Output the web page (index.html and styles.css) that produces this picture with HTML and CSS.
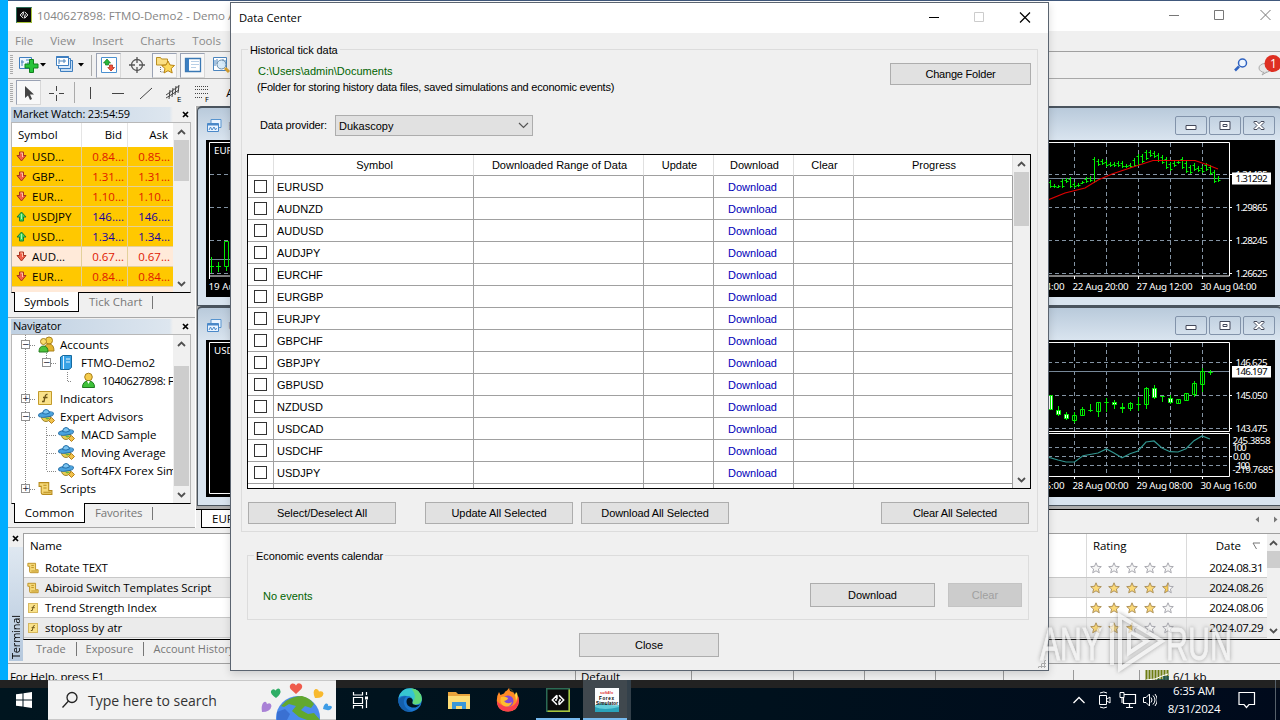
FILE: index.html
```html
<!DOCTYPE html>
<html lang="en">
<head>
  <meta charset="UTF-8" />
  <meta name="viewport" content="width=device-width, initial-scale=1.0"/>
  <title>Data Center</title>
  <link rel="stylesheet" href="styles.css">
</head>
<body>

  <!-- Shared icons -->
  <svg class="sprites" width="0" height="0">
    <symbol id="i-down" viewBox="0 0 11 11"><path d="M3.500 1h4v3.500H10L5.500 10 1 4.500h2.500z" fill="#f0604a" stroke="#a8321c"/><path d="M4.500 2h2v4" fill="none" stroke="#ffc0a8"/></symbol>
    <symbol id="i-up" viewBox="0 0 11 11"><path d="M3.500 10h4V6H10L5.500 1 1 6h2.500z" fill="#3fd05c" stroke="#1b7d35"/><path d="M5.500 3v5" fill="none" stroke="#a8f5b0"/></symbol>
    <symbol id="i-arrow-up" viewBox="0 0 9 6"><path d="M1 5l3.500-3.500L8 5" fill="none" stroke="#505050" stroke-width="1.800"/></symbol>
    <symbol id="i-arrow-down" viewBox="0 0 9 6"><path d="M1 1l3.500 3.500L8 1" fill="none" stroke="#505050" stroke-width="1.800"/></symbol>
    <symbol id="i-x" viewBox="0 0 7 7"><path d="M1 1l5 5M6 1L1 6" stroke="#000" stroke-width="1.700"/></symbol>
    <symbol id="i-mt" viewBox="0 0 16 16"><path d="M.5.5h15v15H.5z" fill="#0a0a0a" stroke="#2b6b55"/><path d="M1 15.500h14.500V1" fill="none" stroke="#a9c53a"/><path d="M7.300 4.800L4.200 8l3.100 3.200M8.700 4.800L11.800 8l-3.100 3.200M7.300 4.800v2.700M8.700 11.200V8.500M6 8h1.300M8.700 8H10" fill="none" stroke="#fff"/></symbol>
    <symbol id="i-chart" viewBox="0 0 16 16"><path d="M5 1.500h10v8H5z" fill="#eaf4ff" stroke="#5794cf"/><path d="M1.500 5.500h11v8h-11z" fill="#eaf4ff" stroke="#4a88c8"/><path d="M1.500 6.500h11" stroke="#4a88c8" stroke-width="2"/><path d="M3 12l1.500-3L6 12l2-3 1.500 3 1-2" fill="none" stroke="#4a88c8"/></symbol>
    <symbol id="i-expert" viewBox="0 0 18 17"><circle cx="8" cy="9" r="4.500" fill="#eacb50" stroke="#9c8630"/><path d="M7 9.500Q9 13 12 10" fill="#6ab83a"/><ellipse cx="8" cy="6.500" rx="7.500" ry="2.600" fill="#4aa3df" stroke="#236fa8" transform="rotate(-8 8 6.500)"/><path d="M4.500 5.500Q5 1.500 8 1.500t3.500 3.500Q8 7 4.500 5.500z" fill="#7cc5f2" stroke="#236fa8"/><path d="M13.500 9.500l3 3-3 3-3-3z" fill="#f2c24a" stroke="#b5801c"/></symbol>
    <symbol id="i-script" viewBox="0 0 14 14"><path d="M1 1.500h9v7.500h3v3.500H4.500Q3 12.500 3 11V5H1z" fill="#f5d878" stroke="#b88b1c"/><path d="M5 4h3M5 6.500h3M5 10.500h7" stroke="#b88b1c"/></symbol>
    <symbol id="i-func" viewBox="0 0 14 14"><path d="M.5.5h13v13H.5z" fill="#fae28a" stroke="#c39a2a"/><path d="M9.500 3.500Q7.500 3 7 6L6 10.500H4M5 6.500h4.500" fill="none" stroke="#6d5417" stroke-width="1.300"/></symbol>
    <symbol id="i-star" viewBox="0 0 12 12"><path d="M6 .8l1.500 3.500 3.800.3-2.900 2.500.9 3.700L6 8.800l-3.300 2 .9-3.700L.7 4.600l3.800-.3z" fill="#f6f6f6" stroke="#a0a0a8" stroke-width=".9"/></symbol>
    <symbol id="i-star-full" viewBox="0 0 12 12"><path d="M6 .8l1.500 3.500 3.800.3-2.900 2.500.9 3.700L6 8.800l-3.300 2 .9-3.700L.7 4.600l3.800-.3z" fill="#fbd978" stroke="#a88a50" stroke-width=".9"/></symbol>
    <symbol id="i-star-half" viewBox="0 0 12 12"><path d="M6 .8l1.500 3.500 3.800.3-2.900 2.500.9 3.700L6 8.800l-3.300 2 .9-3.700L.7 4.600l3.800-.3z" fill="#f6f6f6" stroke="#a0a0a8" stroke-width=".9"/><path d="M6 .8v8l-3.300 2 .9-3.700L.7 4.600l3.800-.3z" fill="#fbcf58" stroke="#a88a50" stroke-width=".7"/></symbol>
    <symbol id="i-win-min" viewBox="0 0 30 17"><path d="M10 8.500h10v4H10z" fill="#fff" stroke="#44495a"/></symbol>
    <symbol id="i-win-max" viewBox="0 0 30 17"><path d="M10 4.500h10v8H10z" fill="#fff" stroke="#44495a"/><path d="M13 7.500h4v2h-4z" fill="#fff" stroke="#44495a"/></symbol>
    <symbol id="i-win-close" viewBox="0 0 30 17"><path d="M10 4.500h3l2 2.200 2-2.200h3v1l-3 3 3 3v1h-3l-2-2.200-2 2.200h-3v-1l3-3-3-3z" fill="#fff" stroke="#44495a"/></symbol>
  </svg>

  <!-- Trading terminal -->
  <div class="terminal-window">
    <div class="titlebar">
      <svg class="app-icon" width="16" height="16"><use href="#i-mt"/></svg>
      <span class="title-text">1040627898: FTMO-Demo2 - Demo Account</span>
      <svg class="caption-buttons" width="119" height="30" viewBox="0 0 119 30"><path d="M8 15.500h10M53.500 10.500h9v9h-9zM99.500 10l10 10M109.500 10l-10 10" fill="none" stroke="#777"/></svg>
    </div>
    <div class="menubar">
      <span>File</span><span>View</span><span>Insert</span><span>Charts</span><span>Tools</span>
    </div>

    <div class="toolbar">
      <i class="grip"></i>
      <span class="tool w35"><svg width="32" height="20" viewBox="0 0 32 20"><path d="M2.500 2.500h12v11h-12z" fill="#eef6ff" stroke="#3f7fc0"/><path d="M5 5v6M4 7h3M9 5h4M10 8h3" stroke="#4a84bd"/><path d="M8 9h4.500V4.500h4V9H21v4h-4.500v4.500h-4V13H8z" fill="#27c43a" stroke="#12801f"/><path d="M23 8h6l-3 3.500z"/></svg></span>
      <span class="tool w38"><svg width="30" height="20" viewBox="0 0 30 20"><path d="M5.500 5.500h12v11h-12z" fill="#c8dff5" stroke="#3f7fc0"/><path d="M3.500 3.500h12v10h-12z" fill="#dcecfb" stroke="#3f7fc0"/><path d="M1.500 1.500h12v9h-12z" fill="#fff" stroke="#3f7fc0"/><path d="M1.500 2h12" stroke="#3f7fc0" stroke-width="2"/><path d="M4 4v5M4 6h7M9 4v4" stroke="#4a84bd"/><path d="M23 8h6l-3 3.500z"/></svg></span>
      <i class="sep"></i>
      <span class="tool pressed"><svg width="18" height="18" viewBox="0 0 18 18"><path d="M1.500 1.500h15v15h-15z" fill="#fff" stroke="#4a90d0"/><path d="M7 3l3.500 4h-2v2h-3V7h-2z" fill="#25b83b" stroke="#137a20" stroke-width=".7"/><path d="M11 15l-3.200-3.500h1.700V9h3v2.500h2z" fill="#f2543c" stroke="#a32614" stroke-width=".7"/></svg></span>
      <span class="tool w31"><svg width="18" height="18" viewBox="0 0 18 18"><circle cx="9" cy="9" r="5.500" fill="none" stroke="#555" stroke-width="1.300"/><path d="M9 1v6M9 11v6M1 9h6M11 9h6" stroke="#555" stroke-width="1.300"/></svg></span>
      <span class="tool pressed"><svg width="20" height="20" viewBox="0 0 20 20"><path d="M1.500 2.500h4l1 1.500h6v6h-11z" fill="#fbdf84" stroke="#b98e23"/><path d="M5.500 12v5h5" fill="none" stroke="#777" stroke-dasharray="1 1"/><path d="M13 6l2 4 4.500.5-3.300 3 1 4.500-4.200-2.300L9 18l1-4.500-3.300-3L11 10z" fill="#fcd95c" stroke="#b98412"/></svg></span>
      <i class="gap"></i>
      <span class="tool pressed"><svg width="18" height="18" viewBox="0 0 18 18"><path d="M1.500 2.500h15v13h-15z" fill="#fff" stroke="#3a78b4" stroke-width="1.300"/><path d="M2 3h3v12H2z" fill="#3c7fc2"/><path d="M7 5.500h8M7 8.500h8M7 11.500h5" stroke="#b8cfe6"/></svg></span>
      <span class="tool w31"><svg width="20" height="20" viewBox="0 0 20 20"><path d="M2.500 2.500h13v13h-13z" fill="#fff" stroke="#4a84bd"/><path d="M4 5v6M6 4v5M12 4v5M14 5v6" stroke="#4a84bd"/><circle cx="10.500" cy="9.500" r="4.500" fill="#d4e9f8" fill-opacity=".9" stroke="#668aa8"/><path d="M14 13l4 4" stroke="#d6a030" stroke-width="3"/></svg></span>
      <svg class="toolbar-right" width="48" height="26" viewBox="0 0 48 26"><circle cx="10.500" cy="11" r="4" fill="#eef6ff" stroke="#2f62c0" stroke-width="1.500"/><path d="M7 14.500l-4 4" stroke="#2f62c0" stroke-width="2.500"/><ellipse cx="33" cy="16" rx="6" ry="4.500" fill="#e6e6e6" stroke="#aaa"/><path d="M32 20l-2 3 5-3" fill="#ddd" stroke="#aaa"/><circle cx="41" cy="11.500" r="8.500" fill="#de2f22"/><text x="38" y="16" class="badge">1</text></svg>
    </div>

    <div class="toolbar second">
      <i class="grip"></i>
      <span class="tool pressed"><svg width="18" height="18" viewBox="0 0 18 18"><path d="M5 2v12l3-2.500 2 4.500 2-1-2-4.500h4z" fill="#444"/></svg></span>
      <span class="tool w30"><svg width="18" height="18" viewBox="0 0 18 18"><path d="M9.500 2v5M9.500 11v6M2 9.500h5M12 9.500h5" stroke="#444"/></svg></span>
      <i class="sep"></i>
      <span class="tool w28 first"><svg width="18" height="18" viewBox="0 0 18 18"><path d="M9.500 3v12" stroke="#444"/></svg></span>
      <span class="tool w28"><svg width="18" height="18" viewBox="0 0 18 18"><path d="M3 9.500h12" stroke="#444"/></svg></span>
      <span class="tool w28"><svg width="18" height="18" viewBox="0 0 18 18"><path d="M3 15L15 4" stroke="#444"/></svg></span>
      <span class="tool w28"><svg width="18" height="20" viewBox="0 0 18 20"><path d="M1 12L14 3M1 15l13-8M5 7l-1 9M8 5L7 14M11 3l-1 9M14 2l-1 8" stroke="#444"/><text x="12" y="19" class="tiny">E</text></svg></span>
      <span class="tool w28"><svg width="18" height="20" viewBox="0 0 18 20"><path d="M2 3.500h13M2 6.500h13M2 10.500h13M2 14.500h8" stroke="#444" stroke-dasharray="1 1"/><text x="12" y="19" class="tiny">F</text></svg></span>
      <span class="tool w28">A</span>
    </div>

    <div class="work-area">
      <div class="docks">
        <div class="dock market">
          <div class="dock-caption"><span>Market Watch: 23:54:59</span><svg width="7" height="7"><use href="#i-x"/></svg></div>
          <div class="dock-body">
            <div class="quotes">
              <div class="quote head"><span>Symbol</span><span>Bid</span><span>Ask</span></div>
              <div id="quoteRows"></div>
            </div>
            <div class="scroll">
              <svg width="9" height="6"><use href="#i-arrow-up"/></svg>
              <i class="thumb quote-thumb"></i>
              <svg class="last" width="9" height="6"><use href="#i-arrow-down"/></svg>
            </div>
          </div>
          <div class="dock-tabs"><b>Symbols</b><span>Tick Chart</span></div>
        </div>

        <div class="dock navigator">
          <div class="dock-caption"><span>Navigator</span><svg width="7" height="7"><use href="#i-x"/></svg></div>
          <div class="dock-body">
            <div class="tree">
              <svg class="tree-lines" width="60" height="168" viewBox="0 0 60 168"><path d="M13.500 0v155M14 10.500h10M14 64.500h10M14 82.500h10M14 154.500h10M34.500 18v10M35 28.500h10M55.500 37v9.500h10M34.500 92v44M35 100.500h10M35 118.500h10M35 136.500h10" fill="none" stroke="#888" stroke-dasharray="1 1"/></svg>
              <div class="node"><i class="expander">−</i><svg width="17" height="17" viewBox="0 0 17 17"><circle cx="11" cy="4.500" r="3.500" fill="#f3cf4a" stroke="#a9801b"/><path d="M6 15Q6 8 11 8t5 7z" fill="#e3b52d" stroke="#a9801b"/><circle cx="5.500" cy="5.500" r="3" fill="#f7dc6c" stroke="#a9801b"/><path d="M1 16q0-6 4.500-6t4.500 6z" fill="#4cc43c" stroke="#227a1c"/></svg><span>Accounts</span></div>
              <div class="node l2"><i class="expander">−</i><svg width="14" height="17" viewBox="0 0 14 17"><path d="M1.500 3L4 1.500h8.500v12L10 15.500H1.500z" fill="#37a2e6" stroke="#176a9f"/><path d="M4.500 2v13M7 5h4M7 8h4" stroke="#e3f4ff"/></svg><span>FTMO-Demo2</span></div>
              <div class="node l3"><svg width="16" height="17" viewBox="0 0 16 17"><circle cx="7.500" cy="5" r="3.800" fill="#f5cc4d" stroke="#a9801b"/><path d="M1.500 15.500q0-6.500 6-6.500t6 6.500z" fill="#3fc13a" stroke="#1c7a1c"/><path d="M6 9l1.500 3L9 9z" fill="#fff"/></svg><span>1040627898: F</span></div>
              <div class="node"><i class="expander">+</i><svg width="14" height="14"><use href="#i-func"/></svg><span>Indicators</span></div>
              <div class="node"><i class="expander">−</i><svg width="18" height="17"><use href="#i-expert"/></svg><span>Expert Advisors</span></div>
              <div class="node l2 leaf"><svg width="18" height="17"><use href="#i-expert"/></svg><span>MACD Sample</span></div>
              <div class="node l2 leaf"><svg width="18" height="17"><use href="#i-expert"/></svg><span>Moving Average</span></div>
              <div class="node l2 leaf"><svg width="18" height="17"><use href="#i-expert"/></svg><span>Soft4FX Forex Sim</span></div>
              <div class="node"><i class="expander">+</i><svg width="15" height="15"><use href="#i-script"/></svg><span>Scripts</span></div>
            </div>
            <div class="scroll">
              <svg width="9" height="6"><use href="#i-arrow-up"/></svg>
              <i class="thumb tree-thumb"></i>
              <svg class="last" width="9" height="6"><use href="#i-arrow-down"/></svg>
            </div>
          </div>
          <div class="dock-tabs"><b class="wide">Common</b><span>Favorites</span></div>
        </div>
      </div>

      <div class="mdi">
        <div class="charts">
          <div class="chart-window top left">
            <div class="chart-title"><svg width="16" height="16"><use href="#i-chart"/></svg><span>EURUSD,H4</span></div>
            <div class="chart">
              <svg width="227" height="157" viewBox="0 0 227 157">
                <path class="grid" d="M4 34.500h223M4 67.500h223M4 100.500h223M4 133.500h223"/>
                <path class="price" d="M4 119.500h223"/>
                <path class="bars" d="M5.500 117v16M4 126.500h4M12.500 122v10M10 126.500h5M20.500 126v5M18.500 101.500h4v25h-4z"/>
                <path class="frame" d="M227 2.500H3.500v133.500H227M3.500 136v3"/>
                <text x="8" y="14">EURUSD,H4</text><text x="2.500" y="149.500">19 Aug 2024</text>
              </svg>
            </div>
          </div>
          <div class="chart-window top right">
            <div class="chart-title">
              <div class="chart-buttons"><svg><use href="#i-win-min"/></svg><svg><use href="#i-win-max"/></svg><svg><use href="#i-win-close"/></svg></div>
            </div>
            <div class="chart">
              <svg width="227" height="157" viewBox="0 0 227 157">
                <path class="grid" d="M0 34.500h181M0 67.500h181M0 100.500h181M0 133.500h181M26.500 3v133M58.500 3v133M90.500 3v133M122.500 3v133M154.500 3v133"/>
                <path class="price" d="M0 38.500h181"/>
                <path class="bars" id="ohlc" d=""/>
                <path class="average" d="M0 60L17 53 37 48 50 40 64 34 82 28 105 20.500H147L160 25 170 29"/>
                <path class="frame" d="M0 2.500h181.500v133.500H0M26.500 136v3M90.500 136v3M154.500 136v3M181 34.500h3M181 67.500h3M181 100.500h3M181 133.500h3"/>
                <text x="187.500" y="38" textLength="32">1.31485</text>
                <path d="M184 32.500h39v12h-39z" fill="#fff"/>
                <text class="now" x="187.500" y="42" textLength="32">1.31292</text>
                <text x="187.500" y="71" textLength="32">1.29865</text><text x="187.500" y="104" textLength="32">1.28245</text><text x="187.500" y="137" textLength="32">1.26625</text>
                <text x="-8" y="149.500" textLength="24.500">04:00</text><text x="24.500" y="149.500" textLength="56">22 Aug 20:00</text><text x="88.500" y="149.500" textLength="56">27 Aug 12:00</text><text x="152.500" y="149.500" textLength="56">30 Aug 04:00</text>
              </svg>
            </div>
          </div>
          <div class="chart-window bottom left">
            <div class="chart-title"><svg width="16" height="16"><use href="#i-chart"/></svg><span>USDJPY,H4</span></div>
            <div class="chart">
              <svg width="227" height="157" viewBox="0 0 227 157">
                <path class="frame" d="M227 2.500H3.500v151H227"/>
                <text x="8" y="14">USDJPY,H4</text>
              </svg>
            </div>
          </div>
          <div class="chart-window bottom right">
            <div class="chart-title">
              <div class="chart-buttons"><svg><use href="#i-win-min"/></svg><svg><use href="#i-win-max"/></svg><svg><use href="#i-win-close"/></svg></div>
            </div>
            <div class="chart">
              <svg width="227" height="157" viewBox="0 0 227 157">
                <path class="grid" d="M0 22.500h181M0 55.500h181M0 88.500h181M0 107.500h181M0 116.500h181M0 125.500h181M26.500 3v133M58.500 3v133M90.500 3v133M122.500 3v133M154.500 3v133"/>
                <path class="price" d="M0 31.500h181"/>
                <g id="candles"></g>
                <path class="cci" d="M0 117L10 120 18 122H26.500L35 115.700 50 113 58.500 109 66 113 74 117.700 82 113.700 90 111 98 102 106 101 114 108 122 111.700 130 112 138 108.700 146 100.700 154 96 162 99"/>
                <path class="frame" d="M0 2.500h181.500v89H0M0 93.500h181.500v43H0M26.500 136v3M90.500 136v3M154.500 136v3M181 22.500h3M181 55.500h3M181 88.500h3M181 116.500h3"/>
                <text x="187.500" y="26" textLength="32">146.625</text>
                <path d="M184 26h39v11.500h-39z" fill="#fff"/>
                <text class="now" x="187.500" y="35" textLength="32">146.197</text>
                <text x="187.500" y="59" textLength="32">145.050</text><text x="187.500" y="92" textLength="32">143.475</text>
                <text x="184.500" y="104" textLength="38">245.3858</text><text x="184.500" y="111" textLength="14">100</text><text x="185" y="120" textLength="17.500">0.00</text><text x="187" y="129" textLength="15">-100</text><text x="184.500" y="133" textLength="41">-219.7685</text>
                <text x="-8" y="149" textLength="24.500">16:00</text><text x="24.500" y="149" textLength="56">28 Aug 00:00</text><text x="88.500" y="149" textLength="56">29 Aug 08:00</text><text x="152.500" y="149" textLength="56">30 Aug 16:00</text>
              </svg>
            </div>
          </div>
        </div>
        <div class="chart-tabs">
          <b>EURUSD,H4</b>
          <svg width="28" height="9" viewBox="0 0 28 9"><path d="M7 1.500v6L3.500 4.500zM22 1.500v6L25.500 4.500z" fill="#777"/></svg>
        </div>
      </div>
    </div>

    <div class="toolbox">
      <div class="toolbox-side"><svg width="7" height="7"><use href="#i-x"/></svg><span>Terminal</span></div>
      <div class="toolbox-main">
        <div class="library">
          <div class="items">
            <div class="item head"><span>Name</span><span>Rating</span><span class="date">Date<svg width="9" height="8" viewBox="0 0 9 8"><path d="M8 1H1l3.500 6" fill="none" stroke="#777"/></svg></span></div>
            <div class="item"><span><svg width="12" height="12"><use href="#i-script"/></svg>Rotate TEXT</span><span class="stars" data-rating="0"></span><span class="date">2024.08.31</span></div>
            <div class="item"><span><svg width="12" height="12"><use href="#i-script"/></svg>Abiroid Switch Templates Script</span><span class="stars" data-rating="4.5"></span><span class="date">2024.08.26</span></div>
            <div class="item"><span><svg width="10" height="10"><use href="#i-func"/></svg>Trend Strength Index</span><span class="stars" data-rating="4"></span><span class="date">2024.08.06</span></div>
            <div class="item"><span><svg width="10" height="10"><use href="#i-func"/></svg>stoploss by atr</span><span class="stars" data-rating="2.5"></span><span class="date">2024.07.29</span></div>
          </div>
          <div class="scroll">
            <svg width="9" height="6"><use href="#i-arrow-up"/></svg>
            <i class="thumb library-thumb"></i>
            <svg class="last" width="9" height="6"><use href="#i-arrow-down"/></svg>
          </div>
        </div>
        <div class="toolbox-tabs"><span>Trade</span><span>Exposure</span><span>Account History</span></div>
      </div>
    </div>

    <div class="statusbar">
      <span class="help">For Help, press F1</span>
      <span class="profile">Default</span>
      <span class="s1"></span><span class="s2"></span><span class="s2"></span><span class="s3"></span><span class="s4"></span><span class="s5"></span>
      <span class="traffic"><svg width="24" height="14" viewBox="0 0 24 14"><path d="M1.500 0v14M4.500 0v14M7.500 0v14M10.500 0v14M13.500 0v14M16.500 0v14M19.500 0v14M22.500 0v14" stroke="#6d7d12" stroke-width="2"/><path d="M0 12h6v-1h6V9h6V6h6v8H0z" fill="#124b52" opacity=".75"/><path d="M1 10l9-1 7-3 6-2" fill="none" stroke="#fff"/></svg>6/1 kb</span>
    </div>
  </div>

  <!-- Data Center dialog -->
  <div class="dialog">
    <div class="dialog-title">
      <span>Data Center</span>
      <svg width="119" height="30" viewBox="0 0 119 30"><path d="M0 14.500h10" stroke="#000"/><path d="M45.500 9.500h9v9h-9z" fill="none" stroke="#ccc"/><path d="M91 9.500l10 10M101 9.500l-10 10" stroke="#000" stroke-width="1.200"/></svg>
    </div>

    <fieldset class="history">
      <legend>Historical tick data</legend>
      <div class="folder">
        <div>
          <p class="path">C:\Users\admin\Documents</p>
          <p class="hint">(Folder for storing history data files, saved simulations and economic events)</p>
        </div>
        <button>Change Folder</button>
      </div>
      <div class="provider">
        <label>Data provider:</label>
        <div class="select">Dukascopy<svg width="11" height="7" viewBox="0 0 11 7"><path d="M1 1l4.500 4.500L10 1" fill="none" stroke="#555" stroke-width="1.200"/></svg></div>
      </div>

      <div class="data-grid">
        <div class="data-rows">
          <div class="data-row head"><span></span><span>Symbol</span><span>Downloaded Range of Data</span><span>Update</span><span>Download</span><span>Clear</span><span>Progress</span></div>
          <div id="symbolRows"></div>
        </div>
        <div class="scroll">
          <svg width="9" height="6"><use href="#i-arrow-up"/></svg>
          <i class="thumb data-thumb"></i>
          <svg class="last" width="9" height="6"><use href="#i-arrow-down"/></svg>
        </div>
      </div>

      <div class="actions">
        <button>Select/Deselect All</button>
        <button class="update-all">Update All Selected</button>
        <button class="download-all">Download All Selected</button>
        <button class="clear-all">Clear All Selected</button>
      </div>
    </fieldset>

    <fieldset class="calendar">
      <legend>Economic events calendar</legend>
      <div class="calendar-row">
        <span class="path">No events</span>
        <button class="get">Download</button>
        <button class="clear" disabled>Clear</button>
      </div>
    </fieldset>

    <button class="close">Close</button>
    <i class="resize-grip"></i>
  </div>

  <!-- Taskbar -->
  <div class="taskbar">
    <div class="start"><svg width="16" height="16" viewBox="0 0 16 16"><path d="M0 2.300l6.500-.9v6.100H0zM7.500 1.200L16 0v7.500H7.500zM0 8.500h6.500v6.100L0 13.700zM7.500 8.500H16V16l-8.500-1.200z" fill="#fff"/></svg></div>
    <div class="search">
      <svg width="18" height="18" viewBox="0 0 18 18"><circle cx="11" cy="6.500" r="5" fill="none" stroke="#222" stroke-width="1.300"/><path d="M7.500 10L1.500 16.500" stroke="#222" stroke-width="1.300"/></svg>
      <span>Type here to search</span>
      <svg class="earth" width="75" height="39" viewBox="0 0 75 39">
        <circle cx="37" cy="37" r="22" fill="#4b8bec"/>
        <path d="M25 20q8-5 16-5 8 2 12 8l-3 4-6-2-4 4 7 4 6-1 6 7H46l-8-3-7-6 4-5-7-2-5 3-3-1z" fill="#62a82e"/>
        <path d="M16 31l8-3 5 5-3 6H16z" fill="#3a70d2"/>
        <path d="M35 13l-5.500-5q-2-4 1.500-5.500 3-.5 4 2 1.500-3 4.500-1.800 3 2 .8 5.300z" fill="#ef5b4c"/>
        <path d="M15 17q-6-4-5-7 2-3 4.500-.5Q17 6 19 8.500q2 4-4 8.500z" fill="#2fae66"/>
        <path d="M54 17q-3-7 .5-9 3-.5 3.500 2.500 4-1 4.500 2-.5 5-8.500 4.500z" fill="#f8b92e"/>
        <path d="M1 31q-1-6 1-9 3-3 4 1 4-2 4.500 2-1 6-9.500 6z" fill="#a981d6"/>
        <path d="M62 28q1-6 4-5.500 2 1 1 2.500 3-1 4 1-1 5-9 2z" fill="#3d9ce6"/>
      </svg>
    </div>
    <div class="apps">
      <span><svg width="18" height="18" viewBox="0 0 18 18"><path d="M1.500 1v3h9V1M1.500 6.500h9v6h-9zM1.500 17.500v-3h9v3M14.500 1v3M14.500 9v8" fill="none" stroke="#fff" stroke-width="1.200"/><path d="M13 5.500h3v3h-3z" fill="#fff"/></svg></span>
      <span><svg width="24" height="24" viewBox="0 0 24 24"><circle cx="12" cy="12" r="11.800" fill="#1b76cf"/><path d="M.5 10Q3 0 12.500.2 23 1 23.800 11q0 5-6.300 5.500-4 0-3-3Q15 8 9 8 3 7 .5 10z" fill="#37c6d0"/><path d="M13 .3Q23 1 23.800 11q0 5-6.300 5.500-4 0-3-2Q20 8 13 .3z" fill="#61d87a"/><path d="M9 8q-4 3-3 8 2 6 9 7.500Q3 26 .3 14 1 8 9 8z" fill="#1460ad"/><path d="M14.500 13.500q-1 3 3 3.500 3 .5 4.500-.8-3 4-8 3.300Q8 18 8.500 13q1-4 4-3 3 1 2 3.500z" fill="#02141f"/></svg></span>
      <span><svg width="22" height="20" viewBox="0 0 22 20"><path d="M0 2h8l2 2h12v15H0z" fill="#e8a33c"/><path d="M0 6h22v13H0z" fill="#fddc76"/><path d="M4 19v-7h14v7h-4v-3H8v3z" fill="#3b97d8"/></svg></span>
      <span><svg width="24" height="24" viewBox="0 0 24 24"><path d="M3 4l1.500 3L8 5.500Q9 3 11 2.500L13 0l1 3q4 1 5 4l1-2q3 4 3 8-.5 10-11 10.500Q1 23 .8 12.500 1 7 3 4z" fill="#ff8a26"/><path d="M1 13q0 10 11 10.500 10-.5 11-10.500 0-3-1-5 0 6-4 9t-9 1q-5-1-8-5z" fill="#fa3f4d"/><circle cx="12" cy="13" r="5.500" fill="#8148d8"/><path d="M5 9q4-1 7 1 0 2-4 3 3 4 8 1-2 6-8 4-5-3-3-9z" fill="#ffbd2e"/><path d="M13 0q7 5 7 13 3-7 0-9l-1 3q-2-5-6-7z" fill="#ffd743"/></svg></span>
      <span class="running"><svg width="24" height="24"><use href="#i-mt"/></svg></span>
      <span class="active"><svg width="24" height="24" viewBox="0 0 24 24"><path d="M0 0h24v24H0z" fill="#fbfdfe"/><path d="M0 17q8-3 12-1t12 1v7H0z" fill="#62cbd8"/><path d="M0 19q9 4 24 0v5H0z" fill="#2aa3ba"/><text x="5" y="6" class="app-brand">soft4fx</text><text x="4" y="12" class="app-name" textLength="15">Forex</text><text x="1" y="17" class="app-name" textLength="22">Simulator</text></svg></span>
    </div>
    <div class="tray">
      <svg width="84" height="20" viewBox="0 0 84 20"><path d="M.5 13l5.500-5.500 5.500 5.500" fill="none" stroke="#fff" stroke-width="1.300"/><path d="M26.500 5.500h7v9h-7zM34 9l3-2v6l-3-2M27 3q4-2 7 0M27 17q4 2 7 0" fill="none" stroke="#fff"/><path d="M50.500 4.500h12v9h-12zM56.500 14v3M53 17.500h7" fill="none" stroke="#fff" stroke-width="1.200"/><path d="M47 2.500h4v5h-4zM49 8v5" fill="#001020" stroke="#fff"/><path d="M70.500 7.500H73l3.500-3.500v12L73 12.500h-2.500z" fill="none" stroke="#fff"/><path d="M78 7.500q2 2.500 0 5M80 5.500q4 4.500 0 9M82 4q4.500 6 0 12" fill="none" stroke="#fff"/></svg>
      <div class="clock"><span>6:35 AM</span><span>8/31/2024</span></div>
      <svg class="notice" width="18" height="18" viewBox="0 0 18 18"><path d="M1 1.500h15.500v12H11l-2.500 3-2.500-3H1z" fill="none" stroke="#fff" stroke-width="1.200"/></svg>
    </div>
  </div>

  <svg class="watermark" width="200" height="66" viewBox="0 0 200 66">
    <text x="2" y="51" textLength="62" lengthAdjust="spacingAndGlyphs">ANY</text>
    <path d="M74 14v42M82 7l42 25-42 28zM91 22l18 10-18 12z"/>
    <text x="128" y="51" textLength="66" lengthAdjust="spacingAndGlyphs">RUN</text>
  </svg>

  <script>
    const quotes = [
      ["down", "USD...", "0.84...", "0.85..."],
      ["down", "GBP...", "1.31...", "1.31..."],
      ["down", "EUR...", "1.10...", "1.10..."],
      ["up", "USDJPY", "146....", "146...."],
      ["up", "USD...", "1.34...", "1.34..."],
      ["down pale", "AUD...", "0.67...", "0.67..."],
      ["down", "EUR...", "0.84...", "0.84..."]
    ];
    document.getElementById("quoteRows").innerHTML = quotes.map(([type, name, bid, ask]) => `
      <div class="quote ${type}">
        <span><svg width="11" height="11"><use href="#i-${type.split(" ")[0]}"/></svg>${name}</span><span>${bid}</span><span>${ask}</span>
      </div>`).join("");

    const symbols = ["EURUSD", "AUDNZD", "AUDUSD", "AUDJPY", "EURCHF", "EURGBP", "EURJPY", "GBPCHF",
      "GBPJPY", "GBPUSD", "NZDUSD", "USDCAD", "USDCHF", "USDJPY"];
    document.getElementById("symbolRows").innerHTML = symbols.map(name => `
      <div class="data-row">
        <span><i class="checkbox"></i></span><span>${name}</span><span></span><span></span><span class="link">Download</span><span></span><span></span>
      </div>`).join("") + `<div class="data-row">${"<span></span>".repeat(7)}</div>`;

    document.querySelectorAll(".stars").forEach(el => {
      const rating = Number(el.dataset.rating);
      for (let i = 0; i < 5; i++) {
        const icon = rating >= i + 1 ? "star-full" : rating > i ? "star-half" : "star";
        el.innerHTML += `<svg width="12" height="12"><use href="#i-${icon}"/></svg>`;
      }
    });

    // OHLC bars: high and low of each bar
    const high = [40,44,45,39,38,37,42,43,41,37,36,17,19,19,20,22,22,21,21,24,23,18,14,14,10,10,11,13,15,17,22,21,20,17,21,25,23,26,26,23,25,30,36];
    const low = [48,48,48,48,43,48,48,47,44,43,42,43,26,25,27,27,27,27,28,28,28,27,26,23,20,17,18,22,24,29,31,27,24,29,33,34,31,32,33,31,35,43,42];
    document.getElementById("ohlc").setAttribute("d", high.map((h, i) => {
      const x = 2.5 + i * 4;
      return `M${x} ${h}V${low[i]}M${x - 2} ${h + 2.5}h2M${x} ${low[i] - 1.5}h2`;
    }).join(""));

    // Candles: high, body top, body bottom, low, filled
    const candles = [
      [55,55,69,70,1], [66,70,74,76,1], [72,74,78,80,1], [72,75,80,83,0], [67,69,75,75,0], [64,70,70,72,0], [62,62,71,77,0],
      [58,62,62,72,0], [60,62,64,69,1], [63,67,68,73,1], [62,63,68,71,0], [57,64,64,71,0], [47,48,64,69,0], [45,48,57,59,1],
      [56,56,56,62,0], [55,58,62,64,1], [59,59,63,63,0], [53,53,60,61,0], [41,43,54,57,0], [28,31,44,52,0], [30,32,32,35,0]
    ];
    document.getElementById("candles").innerHTML = candles.map(([h, t, b, l, filled], i) => {
      const x = 2.5 + i * 8;
      return `<path class="${filled ? "bars filled" : "bars hollow"}" d="M${x} ${h}V${l}M${x - 2} ${t + .5}h4V${b + .5}h-4z"/>`;
    }).join("");
  </script>

</body>
</html>
```
FILE: styles.css
```css
* {
  box-sizing: border-box;
}
body {
  margin: 0;
  width: 1280px;
  height: 720px;
  overflow: hidden;
  position: relative;
  background: #00adff;
  font-family: "Open Sans", "Noto Sans", sans-serif;
  font-size: 11.5px;
  color: #000;
}
svg {
  flex: none;
  display: block;
}
.sprites {
  position: absolute;
}
p {
  margin: 0;
}

/* main window */
.terminal-window {
  position: absolute;
  left: 8px;
  top: 0;
  width: 1272px;
  height: 681px;
  border-top: 1px solid #40587c;
  background: #f0f0f0;
  display: flex;
  flex-direction: column;
}
.titlebar {
  height: 30px;
  background: #fff;
  display: flex;
  align-items: center;
  padding: 0 0 2px 8px;
  color: #858585;
}
.title-text {
  margin-left: 5px;
}
.caption-buttons {
  margin-left: auto;
}
.menubar {
  height: 21px;
  border-bottom: 1px solid #a0a0a0;
  display: flex;
  gap: 17px;
  padding-left: 7px;
  line-height: 19px;
  color: #8a8a8a;
}
.toolbar {
  height: 27px;
  border-bottom: 1px solid #a8a8a8;
  display: flex;
  align-items: center;
}
.toolbar.second {
  border-bottom: 0;
}
.grip {
  width: 3px;
  height: 20px;
  margin: 0 2px 0 2px;
  background: repeating-linear-gradient(#aaa 0 1px, #f0f0f0 1px 2px);
}
.second .grip {
  margin-right: 3px;
}
.sep {
  width: 1px;
  height: 21px;
  margin: 0 3px;
  background: #aaa;
}
.toolbar:not(.second) .sep {
  margin-right: 4px;
}
.gap {
  width: 3px;
}
.tool {
  height: 25px;
  display: flex;
  align-items: center;
  justify-content: center;
}
.pressed {
  width: 25px;
  background: #f8f8f8;
  border: 1px solid #d8d8d8;
  border-top-color: #9aa2b4;
  border-left-color: #9aa2b4;
}
.w28 { width: 28px; }
.w30 { width: 30px; }
.w31 { width: 31px; }
.w35 { width: 36px; }
.w38 { width: 37px; }
.first { margin-left: -2px; }
.toolbar-right {
  margin-left: auto;
}
.badge {
  font-size: 12px;
  fill: #fff;
}
.tiny {
  font: 7px "DejaVu Sans", sans-serif;
}

/* docked panels */
.work-area {
  height: 422px;
  display: flex;
}
.docks {
  width: 188px;
  border-right: 1px solid #fff;
}
.dock {
  height: 212px;
  padding: 1px 4px 0 3px;
  border-bottom: 1px solid #a8a8a8;
}
.navigator {
  height: 210px;
}
.dock-caption {
  height: 15px;
  display: flex;
  align-items: center;
  padding: 0 2px 2px 2px;
  font-size: 11px;
  letter-spacing: -0.17px;
  background: linear-gradient(90deg, #bfd0e2, #dde6ef 88%, #f0f0f0 90%);
}
.dock-caption svg {
  margin: 2px 0 0 auto;
}
.dock-body {
  height: 171px;
  display: flex;
  border: 1px solid #b8b8b8;
  border-bottom: 1px solid #000;
}
.quotes {
  width: 162px;
  overflow: hidden;
  background: #ffead9;
}
.quote {
  display: grid;
  grid-template-columns: 70px 46px 46px;
  height: 20px;
  line-height: 19px;
  background: #ffc800;
  border-bottom: 1px solid #e3d09a;
}
.quote span {
  display: flex;
  align-items: center;
  justify-content: flex-end;
  padding-right: 3px;
  border-right: 1px solid #e3d09a;
}
.quote span:first-child {
  justify-content: flex-start;
  gap: 5px;
  padding-left: 4px;
}
.quote.head {
  height: 24px;
  background: #fff;
  border: 0;
}
.quote.head span {
  border-color: #e5e5e5;
  padding-right: 5px;
  padding-bottom: 1px;
}
.quote.head span:first-child {
  padding-left: 6px;
}
.quote.pale {
  background: #ffead9;
}
.down span + span {
  color: #e01800;
}
.up span + span {
  color: #1a00a0;
}
.scroll {
  width: 17px;
  background: #f0f0f0;
  display: flex;
  flex-direction: column;
  align-items: center;
  padding: 6px 0 5px;
}
.scroll .last {
  margin-top: auto;
}
.thumb {
  width: 15px;
  margin-top: 5px;
  background: #cdcdcd;
}
.quote-thumb { height: 41px; }
.tree-thumb { height: 120px; margin-top: 19px; }
.dock-tabs {
  height: 20px;
  display: flex;
  margin-left: 3px;
  line-height: 18px;
}
.dock-tabs b {
  width: 65px;
  height: 20px;
  margin-top: -1px;
  border: 1px solid #000;
  border-top: 0;
  background: #fff;
  font-weight: normal;
  text-align: center;
  line-height: 19px;
}
.dock-tabs b.wide {
  width: 71px;
}
.dock-tabs span {
  height: 13px;
  line-height: 12px;
  margin-top: 3px;
  padding: 0 10px;
  border-right: 1px solid #777;
  color: #777;
}
.dock-tabs .wide + span {
  padding-right: 10px;
  letter-spacing: -0.15px;
}
.navigator .dock-body {
  height: 170px;
}
.tree {
  width: 162px;
  overflow: hidden;
  position: relative;
  background: #fff;
}
.tree-lines {
  position: absolute;
  left: 0;
  top: 0;
}
.node {
  position: relative;
  height: 18px;
  display: flex;
  align-items: center;
  padding-left: 9px;
  white-space: nowrap;
}
.node svg {
  margin-left: 8px;
}
.node span {
  position: absolute;
  left: 48px;
}
.node.l2 { padding-left: 30px; }
.node.l2 span { left: 69px; }
.node.l3 { padding-left: 61px; }
.node.l3 span { left: 90px; letter-spacing: -0.5px; }
.node.leaf { padding-left: 38px; }
.node.leaf span { letter-spacing: -0.05px; }
.expander {
  width: 9px;
  height: 9px;
  border: 1px solid #919191;
  background: #fff;
  font: 9px/7px "DejaVu Sans", sans-serif;
  text-align: center;
  color: #223;
}

/* chart windows */
.mdi {
  flex: 1;
  overflow: hidden;
}
.charts {
  position: relative;
  height: 403px;
  background: #ababab;
}
.chart-window {
  position: absolute;
  width: 543px;
  height: 200px;
  border: 1px solid #4a545e;
  border-top-width: 2px;
  border-radius: 5px 5px 0 0;
  padding: 0 6px 8px 8px;
  background: linear-gradient(#b9cadb, #d9e4ef 32px);
}
.left { left: 1px; }
.right { left: 543px; }
.top { top: 0; }
.bottom { top: 200px; }
.chart-title {
  height: 32px;
  display: flex;
  align-items: center;
  gap: 6px;
  padding-top: 3px;
  color: #7d93ab;
}
.chart-buttons {
  display: flex;
  gap: 2px;
  margin: 2px 0 0 auto;
}
.chart-buttons svg {
  width: 32px;
  height: 19px;
  border: 1px solid #8293aa;
  border-radius: 2px;
}
.right .chart-title {
  padding-top: 0;
}
.chart {
  height: 157px;
  background: #000;
  display: flex;
  overflow: hidden;
}
.right .chart {
  justify-content: flex-end;
}
.chart path { fill: none; }
.chart path[fill] { fill: #fff; }
.chart .grid { stroke: #8494a4; stroke-dasharray: 4 3; }
.chart .price { stroke: #778899; }
.chart .bars { stroke: #00f000; }
.chart .filled { fill: #fff; }
.chart .hollow { fill: #000; }
.chart .average { stroke: #e00000; stroke-width: 1.2; }
.chart .cci { stroke: #319590; stroke-width: 1.2; }
.chart .frame { stroke: #fff; }
.chart text {
  font: 9.8px "Noto Sans", sans-serif;
  fill: #fff;
}
.chart text.now {
  fill: #000;
}
.chart-tabs {
  height: 19px;
  display: flex;
  justify-content: space-between;
  align-items: center;
  border-top: 1px solid #000;
  padding-left: 5px;
}
.chart-tabs b {
  width: 80px;
  height: 18px;
  padding-left: 10px;
  border: 1px solid #000;
  border-top: 0;
  background: #fff;
  font-weight: normal;
  line-height: 17px;
}

/* toolbox */
.toolbox {
  height: 136px;
  display: flex;
  border-bottom: 1px solid #a0a0a0;
  padding-top: 5px;
}
.toolbox-side {
  width: 15px;
  display: flex;
  flex-direction: column;
  align-items: center;
}
.toolbox-side svg {
  margin-top: 2px;
}
.toolbox-side span {
  width: 14px;
  height: 114px;
  margin-top: 5px;
  line-height: 14px;
  font-size: 11px;
  letter-spacing: -0.2px;
  padding: 2px 0;
  writing-mode: vertical-rl;
  transform: rotate(180deg);
  background: linear-gradient(#b5c8dd, #dfe8f1);
}
.toolbox-main {
  flex: 1;
}
.library {
  height: 107px;
  display: flex;
  border: 1px solid #a0a0a0;
  border-right: 0;
  border-bottom: 1px solid #000;
}
.items {
  flex: 1;
}
.item {
  height: 20px;
  display: grid;
  grid-template-columns: 1fr 100px 80px;
  border-bottom: 1px solid #c8c8c8;
  background: #fff;
  letter-spacing: -0.08px;
}
.item:nth-child(odd) {
  background: #ebebeb;
}
.item.head {
  height: 24px;
  background: #fff;
  border-bottom: 0;
}
.item > span {
  display: flex;
  align-items: center;
  padding-left: 3px;
  gap: 6px;
  border-right: 1px solid #dadada;
}
.item.head > span {
  padding-left: 6px;
  padding-bottom: 1px;
}
.item .stars {
  padding-left: 3px;
}
.item .date {
  justify-content: flex-end;
  border: 0;
  padding-right: 4px;
  letter-spacing: -0.5px;
}
.item.head .date {
  padding-right: 6px;
  gap: 11px;
  letter-spacing: 0;
}
.item > span > svg[width="10"] {
  margin: 0 1px;
}
.library .scroll {
  width: 13px;
}
.library-thumb {
  height: 17px;
  width: 13px;
}
.toolbox-tabs {
  display: flex;
  padding: 2px 0 0 4px;
  font-size: 11px;
  color: #777;
}
.toolbox-tabs span {
  padding: 0 10px 0 9px;
  line-height: 14px;
  border-right: 1px solid #777;
}
.statusbar {
  height: 16px;
  display: flex;
  padding-top: 6px;
  overflow: hidden;
}
.statusbar span {
  border-left: 1px solid #999;
  line-height: 14px;
  padding-left: 5px;
  height: 14px;
}
.statusbar .help {
  width: 567px;
  border: 0;
  padding-left: 2px;
  letter-spacing: -0.1px;
}
.statusbar .profile { width: 116px; }
.s1 { width: 102px; }
.s2 { width: 71px; }
.s3 { width: 68px; }
.s4 { width: 70px; }
.s5 { width: 66px; }
.statusbar .traffic {
  display: flex;
  gap: 4px;
}

/* dialog */
.dialog {
  position: absolute;
  left: 230px;
  top: 2px;
  width: 819px;
  height: 669px;
  border: 1px solid #5b6470;
  background: #f0f0f0;
  box-shadow: 0 3px 8px rgba(0, 0, 0, 0.15);
  font-family: "Liberation Sans", Arial, sans-serif;
  font-size: 11px;
}
.dialog-title {
  height: 30px;
  background: #fff;
  display: flex;
  align-items: center;
  justify-content: space-between;
  padding: 0 0 2px 8px;
  font: 11.2px "Open Sans", sans-serif;
}
.dialog-title svg {
  margin-top: 2px;
}
fieldset {
  min-width: 0;
  margin: 9px 0 0 10px;
  padding: 0;
  border: 1px solid #dcdcdc;
}
legend {
  margin-left: 6px;
  padding: 0 2px;
  height: 14px;
  line-height: 16px;
  letter-spacing: -0.08px;
}
.history {
  width: 797px;
  height: 490px;
}
.folder {
  display: flex;
  justify-content: space-between;
  padding: 7px 6px 0 16px;
  line-height: 16px;
}
.folder p {
  height: 16px;
}
.folder .hint {
  margin-left: -1px;
  letter-spacing: -0.21px;
}
.path {
  color: #006400;
}
button {
  width: 149px;
  height: 22px;
  padding: 0;
  border: 1px solid #adadad;
  background: #e1e1e1;
  font: inherit;
  color: #000;
}
button:disabled {
  background: #cccccc;
  border-color: #c4c4c4;
  color: #a0a0a0;
}
.folder button {
  width: 141px;
  letter-spacing: -0.2px;
}
.provider {
  display: flex;
  align-items: center;
  margin: 20px 0 0 18px;
}
.provider label {
  width: 75px;
  padding-bottom: 1px;
  letter-spacing: -0.15px;
}
.select {
  width: 198px;
  height: 21px;
  display: flex;
  align-items: center;
  justify-content: space-between;
  padding: 0 3px 0 3px;
  border: 1px solid #adadad;
  background: #e1e1e1;
}
.data-grid {
  width: 784px;
  height: 335px;
  margin: 18px 0 0 5px;
  border: 1px solid #000;
  display: flex;
}
.data-rows {
  width: 765px;
  overflow: hidden;
  background: #fff;
}
.data-row {
  display: grid;
  grid-template-columns: 26px 200px 170px 70px 80px 60px 159px;
  height: 22px;
}
.data-row span {
  border: 1px solid #a0a0a0;
  border-width: 0 1px 1px 0;
  padding: 1px 3px 0;
  line-height: 20px;
}
.data-row.head {
  height: 21px;
}
.data-row.head span {
  line-height: 19px;
  padding-top: 1px;
  text-align: center;
  padding-left: 5px;
  border-right-color: #e0e0e0;
}
.data-row .link {
  color: #0000b8;
  padding-right: 5px;
  text-align: center;
}
.checkbox {
  display: block;
  width: 13px;
  height: 13px;
  margin: 3px 0 0 3px;
  border: 1px solid #333;
  background: #fff;
}
.data-thumb {
  height: 54px;
}
.actions {
  display: flex;
  margin: 13px 8px 0 6px;
}
.actions button {
  width: 148px;
  letter-spacing: -0.05px;
}
.actions .update-all { margin-left: 29px; }
.actions .download-all { margin-left: 8px; letter-spacing: -0.1px; }
.actions .clear-all { margin-left: auto; letter-spacing: -0.15px; }
.calendar {
  width: 782px;
  height: 72px;
  margin: 16px 0 0 16px;
}
.calendar-row {
  display: flex;
  align-items: center;
  padding: 21px 6px 0 15px;
}
.calendar-row .path {
  padding-top: 1px;
}
.calendar-row button {
  height: 24px;
}
.calendar-row .get {
  width: 125px;
  margin: 0 13px 0 auto;
}
.calendar-row .clear {
  width: 74px;
}
.close {
  display: block;
  width: 140px;
  height: 24px;
  margin: 13px 0 0 348px;
}
.resize-grip {
  position: absolute;
  right: 2px;
  bottom: 2px;
  width: 9px;
  height: 9px;
  background: radial-gradient(#aaa 1px, transparent 1.2px) 0 0 / 3px 3px;
  clip-path: polygon(100% 0, 100% 100%, 0 100%);
}

/* taskbar */
.taskbar {
  position: absolute;
  left: 0;
  top: 680px;
  width: 1280px;
  height: 40px;
  display: flex;
  background: linear-gradient(#222 8px, transparent 8px), linear-gradient(90deg, #00151f, #00111d 60%, #000a1c);
}
.start {
  width: 48px;
  display: flex;
  align-items: center;
  justify-content: center;
}
.search {
  width: 288px;
  display: flex;
  align-items: center;
  padding-left: 13px;
  background: #f2f2f2;
  border: 1px solid #c8c8c8;
  border-width: 1px 0;
  font-size: 14px;
  color: #333;
}
.search span {
  margin-left: 9px;
}
.earth {
  margin-left: auto;
}
.apps {
  display: flex;
}
.apps span {
  width: 49px;
  display: flex;
  align-items: center;
  justify-content: center;
}
.apps .running {
  margin-left: 1px;
  background: linear-gradient(#76b9ed, #76b9ed) 50% 100% / 44px 2px no-repeat;
}
.apps .active {
  background: #40484e;
  width: 44px;
  margin-left: 1px;
  padding-left: 4px;
  box-shadow: inset 0 -2px #76b9ed, 4px 0 #33404a;
}
.app-brand {
  font: bold 4px "Liberation Sans", sans-serif;
  fill: #d33;
}
.app-name {
  font: bold 4.6px "Liberation Sans", sans-serif;
}
.tray {
  display: flex;
  align-items: center;
  margin-left: auto;
  padding-right: 4px;
  border-right: 1px solid #56606a;
  margin-right: 4px;
  color: #fff;
}
.clock {
  width: 64px;
  margin: 0 12px 0 5px;
  display: flex;
  flex-direction: column;
  align-items: center;
  line-height: 18px;
  letter-spacing: -0.2px;
}
.notice {
  margin-right: 15px;
}
.watermark {
  position: absolute;
  left: 1038px;
  top: 609px;
  opacity: 0.65;
  filter: drop-shadow(0 0 2px #777);
}
.watermark text {
  font: 46px "Liberation Sans", sans-serif;
  fill: #f4f4f4;
  stroke: #f4f4f4;
  stroke-width: 0.8;
}
.watermark path {
  fill: none;
  stroke: #f4f4f4;
  stroke-width: 4;
}
```
